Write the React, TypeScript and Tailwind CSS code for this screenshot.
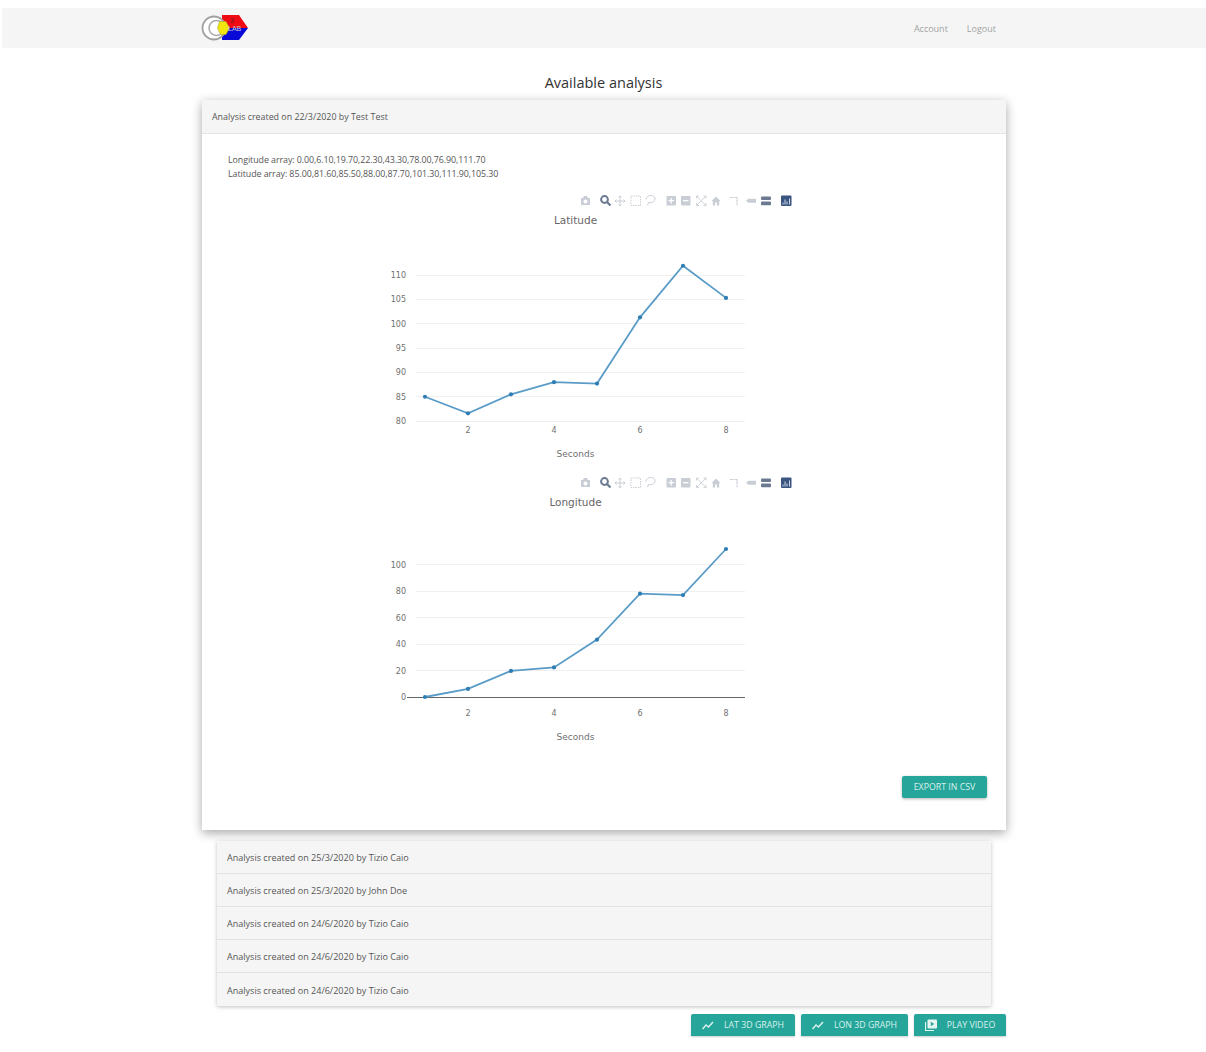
import React from "react";

const FONT = "font-['Open_Sans','Noto_Sans',sans-serif]";
const CHART_FONT = "'DejaVu Sans', sans-serif";

function Logo() {
  return (
    <svg width="50" height="30" viewBox="0 0 50 30" className="block">
      <polygon points="21,2 38,2 47,15 21,15" fill="#f00a14" />
      <polygon points="21,15 47,15 38,27 21,27" fill="#0a0ad8" />
      <circle cx="13" cy="15" r="11.500" fill="#fff" stroke="#a0a0a0" strokeWidth="1.800" />
      <circle cx="15.500" cy="15" r="7.500" fill="#fff" stroke="#a8a8a8" strokeWidth="1.500" />
      <polygon points="18.500,8.500 25,8.500 28.500,15 25,21.500 19.500,21.500 16.500,15" fill="#f2e60f" stroke="#a9a32c" strokeWidth="0.600" />
      <text x="29" y="9.500" fontSize="7" fill="#6e1c1c" fontFamily="'Liberation Sans', sans-serif">3</text>
      <text x="27" y="18" fontSize="7" fill="#c9c9d6" fontFamily="'Liberation Sans', sans-serif">LAB</text>
    </svg>
  );
}

function Toolbar({ dy }: { dy: number }) {
  const c = "#c9ced6";
  const d = "#6b7a90";
  return (
    <g transform={`translate(0,${dy})`}>
      {/* camera */}
      <g transform="translate(352,5)" fill={c}>
        <path d="M1 3h2l1-2h3l1 2h2v7H1z" />
        <circle cx="5.500" cy="6.500" r="2" fill="#fff" />
      </g>
      {/* zoom */}
      <g transform="translate(372,5)">
        <circle cx="4.500" cy="4.500" r="3.400" fill="none" stroke={d} strokeWidth="2" />
        <path d="M7 7l3.500 3.500" stroke={d} strokeWidth="2.200" />
      </g>
      {/* pan */}
      <path d="M387 11h10M392 6v10M387 11l1.500-1.500M387 11l1.500 1.500M397 11l-1.500-1.500M397 11l-1.500 1.500M392 6l-1.500 1.500M392 6l1.500 1.500M392 16l-1.500-1.500M392 16l1.500-1.500" stroke={c} strokeWidth="1" fill="none" />
      {/* box */}
      <rect x="403" y="6" width="9.500" height="9.500" fill="none" stroke={c} strokeWidth="1" strokeDasharray="1.500 1" />
      {/* lasso */}
      <path d="M418 9.500c0-2.500 2.200-4 4.700-4s4.300 1.500 4.300 3.500-2 3.600-4.500 3.600l-2 .1-1 2.300" fill="none" stroke={c} strokeWidth="1" />
      {/* plus */}
      <rect x="438.500" y="6" width="9.500" height="9.500" rx="1" fill={c} />
      <path d="M440.500 10.700h5.500M443.200 8v5.500" stroke="#fff" strokeWidth="1.300" />
      {/* minus */}
      <rect x="453" y="6" width="9.500" height="9.500" rx="1" fill={c} />
      <path d="M455 10.700h5.500" stroke="#fff" strokeWidth="1.300" />
      {/* autoscale */}
      <path d="M468.500 6l9.500 9.500M478 6l-9.500 9.500M468.500 6h2.500M468.500 6v2.500M478 6h-2.500M478 6v2.500M468.500 15.500h2.500M468.500 15.500V13M478 15.500h-2.500M478 15.500V13" stroke={c} strokeWidth="0.900" fill="none" />
      {/* home */}
      <path d="M483.500 11l4.500-4.500 4.500 4.500h-1.300v4.500h-2.300v-3h-1.800v3h-2.300V11z" fill={c} />
      {/* spike */}
      <path d="M502 7.500h7.500M509 7.500v8" stroke={c} strokeWidth="1.200" strokeDasharray="2 0.600" fill="none" />
      {/* closest */}
      <path d="M518 10.700l2.500-2h7.500v4h-7.500z" fill={c} />
      {/* compare */}
      <rect x="533" y="6.400" width="10" height="3.600" rx="1" fill={d} />
      <rect x="533" y="11.600" width="10" height="3.600" rx="1" fill={d} />
      {/* plotly */}
      <rect x="553" y="5.500" width="10.500" height="10.500" rx="1" fill="#3a5580" />
      <path d="M555 14.500v-2M557 14.500v-5M559 14.500v-3M561.500 14.500v-6" stroke="#dfe6f2" strokeWidth="0.900" />
    </g>
  );
}

type ChartProps = {
  title: string;
  data: number[];
  ticks: number[];
  y: (v: number) => number;
  axis?: boolean;
  top?: number;
};

function Chart({ title, data, ticks, y, axis, top = 0 }: ChartProps) {
  const x = (i: number) => 197 + i * 43;
  const pts = data.map((v, i) => `${x(i)},${y(v)}`).join(" ");
  return (
    <svg width="576" height="282.500" viewBox="0 0 576 282.5" className="block" style={{ fontFamily: CHART_FONT }}>
      <Toolbar dy={top} />
      <text x="347.500" y={33.500 + top} textAnchor="middle" fontSize="10.500" fill="#666">{title}</text>
      {ticks.map((t) => (
        <g key={t}>
          {!(axis && t === 0) && <line x1="188" x2="517" y1={y(t)} y2={y(t)} stroke="#f0f0f0" shapeRendering="crispEdges" />}
          <text x="178" y={y(t) + 3} textAnchor="end" fontSize="8" fill="#707070">{t}</text>
        </g>
      ))}
      {axis && <line x1="179" x2="517" y1={y(0)} y2={y(0)} stroke="#666" shapeRendering="crispEdges" />}
      {[2, 4, 6, 8].map((t) => (
        <text key={t} x={x(t - 1)} y={242.500} textAnchor="middle" fontSize="8" fill="#707070">{t}</text>
      ))}
      <text x="347.500" y="267" textAnchor="middle" fontSize="9" fill="#707070">Seconds</text>
      <polyline points={pts} fill="none" stroke="#5a9cc8" strokeWidth="1.800" />
      {data.map((v, i) => (
        <circle key={i} cx={x(i)} cy={y(v)} r="2.100" fill="#2f7db3" />
      ))}
    </svg>
  );
}

function TrendIcon() {
  return (
    <svg width="12" height="9" viewBox="0 0 12 9" className="shrink-0">
      <path d="M0.500 8l3.500-4 2.500 2L11 1" fill="none" stroke="#d9f0ec" strokeWidth="1.500" />
    </svg>
  );
}

function VideoIcon() {
  return (
    <svg width="12" height="12" viewBox="0 0 12 12" className="shrink-0">
      <path d="M0.500 3v8.500h8.500" fill="none" stroke="#e6f5f2" strokeWidth="1.200" />
      <rect x="2.500" y="0.500" width="9.500" height="9" rx="1" fill="#e6f5f2" />
      <path d="M5.800 2.800l3.400 2.200-3.400 2.200z" fill="#26a69a" />
    </svg>
  );
}

function ActionButton({ icon, label, w }: { icon: React.ReactNode; label: string; w: string }) {
  return (
    <div className={`flex h-[22px] items-center justify-center gap-[10px] rounded-t-[2px] bg-[#26a69a] text-[8.800px] text-[#d9f0ec] shadow-[0_1px_2px_rgba(0,0,0,0.2)] ${w}`}>
      {icon}
      <span className="pt-[1px]">{label}</span>
    </div>
  );
}

const ITEMS = [
  "Analysis created on 25/3/2020 by Tizio Caio",
  "Analysis created on 25/3/2020 by John Doe",
  "Analysis created on 24/6/2020 by Tizio Caio",
  "Analysis created on 24/6/2020 by Tizio Caio",
  "Analysis created on 24/6/2020 by Tizio Caio",
];

export default function App() {
  return (
    <div className={`h-[1052px] w-[1206px] overflow-hidden bg-white pt-2 ${FONT}`}>
      <header className="ml-[2px] flex h-10 items-center justify-between bg-[#f5f5f5] pl-[199px] pr-[210px]">
        <Logo />
        <nav className="flex gap-[19px] pt-[1px] text-[9px] text-[#a3a3a3]">
          <span>Account</span>
          <span>Logout</span>
        </nav>
      </header>

      <h1 className="mt-[24px] ml-[1px] text-center text-[14.500px] leading-[22px] text-[#333]">Available analysis</h1>

      <main className="ml-[202px] mt-[6px] w-[804px]">
        <section className="shadow-[0_3px_10px_rgba(0,0,0,0.35)]">
          <div className="flex h-[34px] items-center border-b border-[#e4e4e4] bg-[#f5f5f5] pl-[10px] pt-[1px] text-[8.900px] text-[#555]">
            Analysis created on 22/3/2020 by Test Test
          </div>
          <div className="h-[696px] bg-white">
            <div className="pl-[26px] pt-[19px] text-[8.900px] leading-[14px] tracking-[-0.07px] text-[#555]">
              <p>Longitude array: 0.00,6.10,19.70,22.30,43.30,78.00,76.90,111.70</p>
              <p>Latitude array: 85.00,81.60,85.50,88.00,87.70,101.30,111.90,105.30</p>
            </div>
            <div className="ml-[26px] mt-[9px] flex flex-col">
              <Chart
                title="Latitude"
                data={[85, 81.6, 85.5, 88, 87.7, 101.3, 111.9, 105.3]}
                ticks={[110, 105, 100, 95, 90, 85, 80]}
                y={(v) => 85 + (110 - v) * 4.87}
              />
              <Chart
                title="Longitude"
                data={[0, 6.1, 19.7, 22.3, 43.3, 78, 76.9, 111.7]}
                ticks={[100, 80, 60, 40, 20, 0]}
                y={(v) => 224 - v * 1.325}
                axis
                top={-1}
              />
            </div>
            <div className="mr-[19px] mt-[21px] flex justify-end">
              <div className="flex h-[22px] w-[85px] items-center justify-center rounded-[2px] bg-[#26a69a] pt-[2px] text-[8.800px] text-[#d9f0ec] shadow-[0_1px_3px_rgba(0,0,0,0.3)]">
                EXPORT IN CSV
              </div>
            </div>
          </div>
        </section>

        <ul className="mx-[15px] mt-[11px] flex flex-col shadow-[0_1px_4px_rgba(0,0,0,0.25)]">
          {ITEMS.map((t, i) => (
            <li key={i} className="flex h-[33px] items-center border-b border-[#e2e2e2] bg-[#f5f5f5] pl-[10px] pt-[2px] text-[9.050px] text-[#555] last:border-b-0">
              {t}
            </li>
          ))}
        </ul>

        <div className="mt-[8px] flex h-[22px] justify-end gap-[6px]">
          <ActionButton icon={<TrendIcon />} label="LAT 3D GRAPH" w="w-[104px]" />
          <ActionButton icon={<TrendIcon />} label="LON 3D GRAPH" w="w-[107px]" />
          <ActionButton icon={<VideoIcon />} label="PLAY VIDEO" w="w-[92px]" />
        </div>
      </main>
    </div>
  );
}
